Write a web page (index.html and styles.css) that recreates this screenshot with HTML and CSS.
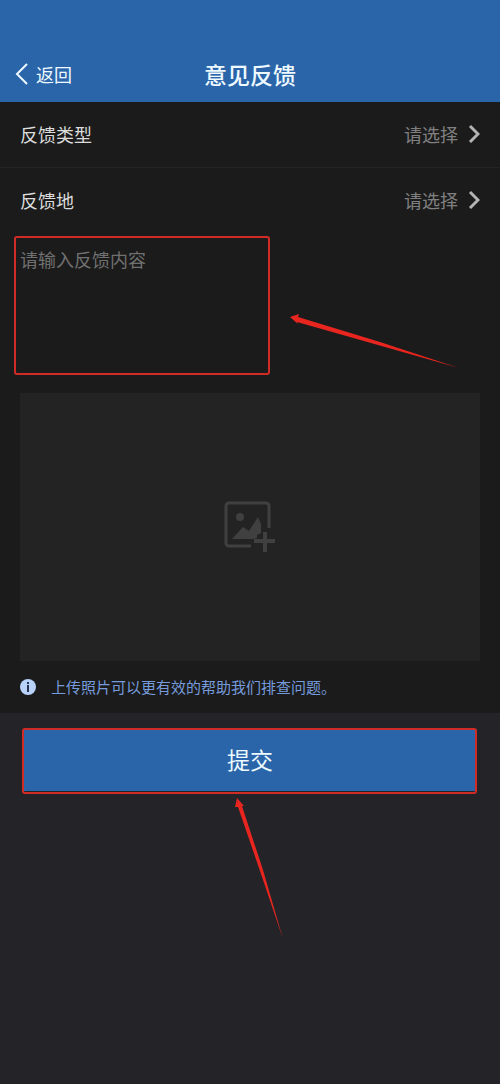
FILE: index.html
```html
<!DOCTYPE html>
<html lang="zh-CN">
<head>
    <meta charset="UTF-8">
    <meta name="viewport" content="width=device-width, initial-scale=1.0">
    <title>意见反馈</title>
    <link rel="stylesheet" href="styles.css">
</head>
<body>
    <header class="header">
        <a class="back" href="#">
            <svg width="13" height="22" viewBox="0 0 13 22" fill="none" stroke="currentColor" stroke-width="2"><path d="M12 1L2 11l10 10"/></svg>
            返回
        </a>
        <h1 class="title">意见反馈</h1>
    </header>

    <form>
        <div class="panel">
            <div class="row">
                <label for="type">反馈类型</label>
                <select id="type">
                    <option>请选择</option>
                </select>
                <svg class="chevron" width="12" height="20" viewBox="0 0 12 20"><path d="M2 2l8 8-8 8"/></svg>
            </div>
            <div class="row">
                <label for="place">反馈地</label>
                <select id="place">
                    <option>请选择</option>
                </select>
                <svg class="chevron" width="12" height="20" viewBox="0 0 12 20"><path d="M2 2l8 8-8 8"/></svg>
            </div>

            <div class="content">
                <textarea class="text" aria-label="反馈内容" placeholder="请输入反馈内容"></textarea>
                <div class="mark mark-text"></div>
                <svg class="arrow arrow-text" width="170" height="54" viewBox="0 0 170 54"><path d="M0 2L9 -1L8 2L90 27L169 53L88 30L7 7L8 9Z"/></svg>
            </div>

            <button class="upload" type="button" aria-label="上传照片">
                <svg width="52" height="52" viewBox="0 0 52 52">
                    <path d="M27 45H5a3 3 0 0 1-3-3V5a3 3 0 0 1 3-3h37a3 3 0 0 1 3 3v22" fill="none" stroke="currentColor" stroke-width="3"/>
                    <circle cx="16" cy="16" r="4" fill="currentColor"/>
                    <path d="M8 38l11-12 6 4 9-14 3 7v9l-4 2v3l-4 1z" fill="currentColor"/>
                    <path d="M41 31v20M30 40h21" fill="none" stroke="currentColor" stroke-width="4"/>
                </svg>
            </button>

            <p class="hint">
                <svg width="16" height="16" viewBox="0 0 16 16">
                    <circle cx="8" cy="8" r="8" fill="#b9d2fa"/>
                    <path d="M7 3h2v2H7zM7 6h2v7H7z" fill="#26344f"/>
                </svg>
                <span>上传照片可以更有效的帮助我们排查问题。</span>
            </p>
        </div>

        <div class="footer">
            <button class="submit" type="submit">提交</button>
            <div class="mark mark-submit"></div>
            <svg class="arrow arrow-submit" width="48" height="142" viewBox="0 0 48 142"><path d="M2 0L9 8L7 8L28 72L48 141L25 73L3 9L0 9Z"/></svg>
        </div>
    </form>
</body>
</html>
```
FILE: styles.css
```css
* {
    box-sizing: border-box;
}
body {
    margin: 0;
    min-height: 100vh;
    background: #232328;
    color: #dcdcdc;
    font-family: "Noto Sans CJK SC", sans-serif;
    font-size: 18px;
}
button, select, textarea {
    font: inherit;
    border: none;
    outline: none;
}
.header {
    display: grid;
    grid-template-columns: 1fr auto 1fr;
    align-items: center;
    padding: 45px 15px 0;
    height: 102px;
    background: #2b65a9;
    color: #eefaff;
}
.back {
    display: flex;
    align-items: center;
    gap: 8px;
    color: inherit;
    text-decoration: none;
}
.title {
    margin: 0;
    font-size: 23px;
    font-weight: 500;
}
.panel {
    padding: 0 20px;
    background: #1b1b1b;
}
.row {
    display: flex;
    align-items: center;
    height: 65px;
    padding-bottom: 1px;
}
.row + .row {
    margin: 0 -20px;
    padding: 0 20px 1px;
    border-top: 1px solid #242424;
}
.row select {
    flex: 1;
    margin-right: 10px;
    padding: 0;
    appearance: none;
    background: none;
    color: #808080;
    text-align-last: right;
}
.chevron {
    fill: none;
    stroke: #b4b4b4;
    stroke-width: 3;
}
.content {
    position: relative;
    height: 161px;
}
.text {
    display: block;
    width: 100%;
    height: 100%;
    padding: 14px 0;
    resize: none;
    background: none;
    color: #dcdcdc;
}
.text::placeholder {
    color: #707070;
}
.upload {
    display: flex;
    align-items: center;
    justify-content: center;
    width: 100%;
    height: 268px;
    background: #232323;
    color: #404040;
}
.hint {
    display: flex;
    align-items: center;
    gap: 15px;
    height: 52px;
    margin: 0;
    color: #769bdc;
    font-size: 15px;
}
.hint span {
    padding-bottom: 2px;
}
.footer {
    position: relative;
    padding: 17px 23px;
}
.submit {
    display: block;
    width: 100%;
    height: 61px;
    padding: 0 0 4px;
    background: #2b65a9;
    color: #eefaff;
    font-size: 23px;
}

/* red callouts */
.mark {
    position: absolute;
    border: 2px solid #d12b27;
    border-radius: 3px;
    pointer-events: none;
}
.mark-text {
    top: 4px;
    left: -6px;
    width: 256px;
    height: 139px;
}
.mark-submit {
    top: 15px;
    left: 22px;
    right: 23px;
    height: 66px;
}
.arrow {
    position: absolute;
    overflow: visible;
    fill: #e8261f;
    pointer-events: none;
}
.arrow-text {
    top: 83px;
    left: 270px;
}
.arrow-submit {
    top: 85px;
    left: 235px;
}
```
